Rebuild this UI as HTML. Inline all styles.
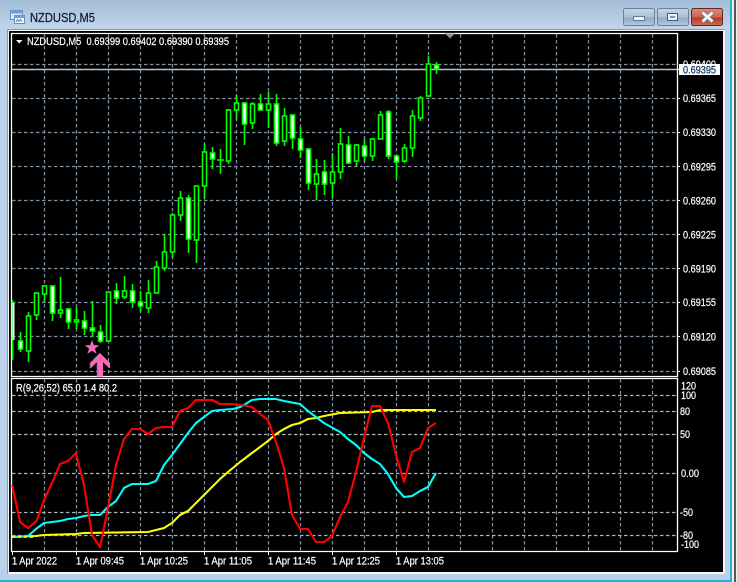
<!DOCTYPE html>
<html><head><meta charset="utf-8"><title>NZDUSD,M5</title>
<style>
html,body{margin:0;padding:0;background:#fff}
svg{display:block}
text{font-family:"Liberation Sans",sans-serif;font-size:11px;fill:#fff;stroke:#fff;stroke-width:.22px}
.g{stroke:#7f8fa0;stroke-width:1.25;stroke-dasharray:3.5 2.5;fill:none}
.c rect{stroke:#00ff00;stroke-width:1.6}
.h{fill:#000}.w{fill:#fff}
.l{fill:none;stroke-width:2.1;stroke-linejoin:round}
</style></head><body>
<svg width="737" height="582" viewBox="0 0 737 582" xmlns="http://www.w3.org/2000/svg">
<defs>
<linearGradient id="tb" x1="0" y1="0" x2="0" y2="1"><stop offset="0" stop-color="#a3bdd7"/><stop offset="1" stop-color="#c3d6e9"/></linearGradient>
<linearGradient id="btn" x1="0" y1="0" x2="0" y2="1"><stop offset="0" stop-color="#c5d6e6"/><stop offset=".5" stop-color="#a9c1d8"/><stop offset=".55" stop-color="#8facc8"/><stop offset="1" stop-color="#b4cade"/></linearGradient>
<linearGradient id="cl" x1="0" y1="0" x2="0" y2="1"><stop offset="0" stop-color="#dd8a7c"/><stop offset=".5" stop-color="#cf6453"/><stop offset=".55" stop-color="#b83a2a"/><stop offset="1" stop-color="#cc6a58"/></linearGradient>
</defs>
<rect width="737" height="582" fill="#b9d1ea"/>
<rect width="731" height="30" fill="url(#tb)"/>
<rect x="730" y="0" width="2" height="582" fill="#1fb4cf"/>
<rect x="732" y="0" width="2" height="582" fill="#f0f0f0"/>
<rect x="734" y="0" width="2" height="582" fill="#555"/>
<rect x="736" y="0" width="1" height="582" fill="#eee"/>
<rect x="0" y="580" width="732" height="2" fill="#1fb4cf"/>

<!-- title icon -->
<rect x="10.5" y="10.5" width="12" height="9" fill="#dce9f7" stroke="#5f8fc7"/>
<rect x="10.5" y="10.5" width="12" height="3" fill="#6f9fd6"/>
<rect x="14.5" y="15.5" width="10" height="8" fill="#f2f7fc" stroke="#5f8fc7"/>
<rect x="14.5" y="15.5" width="10" height="2.5" fill="#6f9fd6"/>
<path d="M16 22l1.5-2.5 1.5 2 1.5-2 1.5 2" fill="none" stroke="#3a6ea8" stroke-width=".8"/>
<text x="30" y="22" style="font-size:13px;fill:#141c30;stroke:#141c30;stroke-width:.25px" textLength="65" lengthAdjust="spacingAndGlyphs">NZDUSD,M5</text>

<!-- buttons -->
<rect x="623.5" y="8.5" width="31" height="17" rx="2" fill="url(#btn)" stroke="#6b8199"/>
<rect x="633.5" y="16.5" width="11" height="4" fill="#f1f4f7" stroke="#54647a" stroke-width=".8"/>
<rect x="657.5" y="8.5" width="31" height="17" rx="2" fill="url(#btn)" stroke="#6b8199"/>
<rect x="667.5" y="13.5" width="10" height="7" fill="#eef2f6" stroke="#4a5a70"/>
<rect x="670" y="16" width="5" height="2" fill="#7f98b2"/>
<rect x="691.5" y="8.5" width="31" height="17" rx="2" fill="url(#cl)" stroke="#5b2a2a"/>
<path d="M702.5 12.5L712.5 21.5M712.5 12.5L702.5 21.5" stroke="#55606e" stroke-width="4.4"/>
<path d="M702.5 12.5L712.5 21.5M712.5 12.5L702.5 21.5" stroke="#f4f4f4" stroke-width="3"/>

<!-- client area -->
<rect x="7" y="29" width="718" height="545" fill="#f4f6f8"/>
<path d="M7.5 574V29.5H725" stroke="#8d99a6" stroke-width="1" fill="none"/>
<rect x="9" y="31" width="714" height="541" fill="#000"/>

<!-- frames -->
<path d="M11.500 376.500V33.500H677.500V376.500H11.500ZM11.500 551.500V378.500H677.500V551.500H11.500Z" fill="none" stroke="#fff" stroke-width="1.3"/>

<!-- grid -->
<path class="g" d="M44.500 34V376M76.500 34V376M108.500 34V376M140.500 34V376M172.500 34V376M204.500 34V376M236.500 34V376M268.500 34V376M300.500 34V376M332.500 34V376M364.500 34V376M396.500 34V376M428.500 34V376M460.500 34V376M492.500 34V376M524.500 34V376M556.500 34V376M588.500 34V376M620.500 34V376M652.500 34V376"/>
<path class="g" d="M12 64.500H677M12 98.500H677M12 132.500H677M12 166.500H677M12 200.500H677M12 234.500H677M12 268.500H677M12 302.500H677M12 336.500H677M12 371.500H677"/>
<path class="g" d="M44.500 379V551M76.500 379V551M108.500 379V551M140.500 379V551M172.500 379V551M204.500 379V551M236.500 379V551M268.500 379V551M300.500 379V551M332.500 379V551M364.500 379V551M396.500 379V551M428.500 379V551M460.500 379V551M492.500 379V551M524.500 379V551M556.500 379V551M588.500 379V551M620.500 379V551M652.500 379V551"/>
<path class="g" style="stroke:#a9b4bf" d="M12 395.500H677M12 411.500H677M12 434.500H677M12 473.500H677M12 512.500H677M12 535.500H677"/>

<!-- bid line -->
<path d="M12 69.500H677" stroke="#c0c0c0" stroke-width="1.4"/>
<path d="M445 33.500H455L450 38.500Z" fill="#8a8f96"/>

<!-- candles -->
<g transform="translate(.5 0)">
<path stroke="#00ff00" stroke-width="1.6" fill="none" d="M12 300V360M20 332V352M28 312V362M36 293V320M44 285V302M52 286V321M60 277V318M68 309V329M76 307V329M84 311V335M92 301V337M100 325V343M108 292V341M116 283V304M124 276V299M132 284V308M140 291V312M148 280V313M156 261V293M164 234V271M172 213V258M180 191V221M188 195V253M196 186V263M204 144V199M212 147V169M220 149V174M216.500 160H223.500M228 109V164M236 95V120M244 102V145M252 102V129M260 94V110M268 92V128M276 94V146M284 108V146M292 115V149M300 127V158M308 149V190M316 159V200M324 160V195M332 153V198M340 128V179M348 136V164M356 144V166M364 139V162M372 138V161M380 111V139M388 110V159M396 156V179M404 144V163M412 110V157M420 96V121M428 56V96M436 62V74"/>
<g class="c">
<rect class="w" x="12" y="303" width="2" height="37" style="stroke:none"/>
<rect class="w" x="18" y="341" width="4" height="8"/>
<rect class="h" x="26" y="316" width="4" height="35"/>
<rect class="h" x="34" y="293" width="4" height="22"/>
<rect class="h" x="42" y="286" width="4" height="8"/>
<rect class="w" x="50" y="286" width="4" height="27"/>
<rect class="h" x="58" y="310" width="4" height="3"/>
<rect class="w" x="66" y="309" width="4" height="13"/>
<rect class="h" x="74" y="320" width="4" height="2"/>
<rect class="w" x="82" y="321" width="4" height="7"/>
<rect class="w" x="90" y="328" width="4" height="3"/>
<rect class="w" x="98" y="332" width="4" height="9"/>
<rect class="h" x="106" y="292" width="4" height="49"/>
<rect class="w" x="114" y="291" width="4" height="7"/>
<rect class="h" x="122" y="291" width="4" height="6"/>
<rect class="w" x="130" y="291" width="4" height="11"/>
<rect class="w" x="138" y="302" width="4" height="4"/>
<rect class="h" x="146" y="293" width="4" height="15"/>
<rect class="h" x="154" y="267" width="4" height="26"/>
<rect class="h" x="162" y="252" width="4" height="16"/>
<rect class="h" x="170" y="215" width="4" height="37"/>
<rect class="h" x="178" y="198" width="4" height="17"/>
<rect class="w" x="186" y="198" width="4" height="41"/>
<rect class="h" x="194" y="186" width="4" height="54"/>
<rect class="h" x="202" y="152" width="4" height="34"/>
<rect class="w" x="210" y="153" width="4" height="6"/>
<rect class="h" x="226" y="110" width="4" height="51"/>
<rect class="h" x="234" y="103" width="4" height="7"/>
<rect class="w" x="242" y="103" width="4" height="21"/>
<rect class="h" x="250" y="104" width="4" height="19"/>
<rect class="w" x="258" y="104" width="4" height="6"/>
<rect class="h" x="266" y="104" width="4" height="6"/>
<rect class="w" x="274" y="104" width="4" height="39"/>
<rect class="h" x="282" y="116" width="4" height="25"/>
<rect class="w" x="290" y="115" width="4" height="23"/>
<rect class="w" x="298" y="139" width="4" height="11"/>
<rect class="w" x="306" y="149" width="4" height="34"/>
<rect class="h" x="314" y="174" width="4" height="10"/>
<rect class="w" x="322" y="172" width="4" height="12"/>
<rect class="h" x="330" y="172" width="4" height="11"/>
<rect class="h" x="338" y="144" width="4" height="28"/>
<rect class="w" x="346" y="145" width="4" height="18"/>
<rect class="h" x="354" y="145" width="4" height="16"/>
<rect class="w" x="362" y="146" width="4" height="10"/>
<rect class="h" x="370" y="139" width="4" height="17"/>
<rect class="h" x="378" y="115" width="4" height="24"/>
<rect class="w" x="386" y="112" width="4" height="44"/>
<rect class="w" x="394" y="156" width="4" height="6"/>
<rect class="h" x="402" y="148" width="4" height="13"/>
<rect class="h" x="410" y="116" width="4" height="32"/>
<rect class="h" x="418" y="98" width="4" height="20"/>
<rect class="h" x="426" y="64" width="4" height="32"/>
<rect class="w" x="434" y="65" width="4" height="4"/>
</g></g>

<!-- star & arrow -->
<path d="M92 340l1.800 5.200 5.400.1-4.300 3.300 1.600 5.200-4.500-3.100-4.500 3.100 1.600-5.200-4.300-3.300 5.400-.1Z" fill="#ff69b4" stroke="#5a4a9a" stroke-width=".4"/>
<path d="M100 353L90 363V368H91L97 362V376.500H103V362L109 368H110V363Z" fill="#ff69b4"/>
<path d="M100 353L90 363V368H91M97 362V376.500" fill="none" stroke="#6a5ab0" stroke-width=".7"/>

<!-- indicator lines -->
<polyline class="l" stroke="#ffff00" points="12,537 36,536 44,535 76,534 84,533 148,532 156,530 164,528 172,523 180,515 188,511 196,503 204,495 212,487 220,479 228,472 240,462 252,453 260,447 268,441 276,434 284,429 292,425 300,423 308,419 316,418 324,416 340,413 372,412 380,410 428,410 436,410"/>
<polyline class="l" stroke="#00ffff" points="12,537 28,536 36,529 44,523 52,522 60,521 68,519 76,518 84,516 92,515 100,515 108,507 116,501 124,488 132,484 148,484 156,481 164,465 172,455 180,444 188,433 196,423 204,417 212,411 220,410 233,409 240,407 244,405 252,400 260,399 276,399 284,401 300,404 308,411 316,417 324,423 340,432 348,439 356,445 364,453 372,459 380,464 388,474 396,488 404,497 412,496 420,491 428,487 436,473"/>
<polyline class="l" stroke="#ff0000" points="12.300,485 20,522 28,528 36.700,521 44,500 52,483 60,464 68,461 76,453 84,485 92,535 100,547 108,508 116,465 124,439 132,429 140,429 148,434 156,428 164,427 172,427 180,411 188,408 196,400 212,400 220,404 233,404 247,406 252,407 260,414 268,420 276,442 284,468 292,515 300,529 308,529 316,542 324,542 332,536 340,517 348,502 356,472 364,438 372,406 380,406 388,423 396,455 404,482 412,452 420,448 428,428 436,423"/>
<path d="M12 537H36" stroke="#ffff00" stroke-width="1.800" stroke-dasharray="3 3"/>

<!-- legends -->
<path d="M16 40H22.500L19.200 43.500Z" fill="#fff"/>
<text x="27" y="45" textLength="202" lengthAdjust="spacingAndGlyphs" xml:space="preserve">NZDUSD,M5  0.69399 0.69402 0.69390 0.69395</text>
<text x="16" y="391.500" textLength="101" lengthAdjust="spacingAndGlyphs">R(9,26,52) 65.0 1.4 80.2</text>

<!-- price axis -->
<path stroke="#fff" d="M677 98.500H680M677 132.500H680M677 166.500H680M677 200.500H680M677 234.500H680M677 268.500H680M677 302.500H680M677 336.500H680M677 371.500H680"/>
<g>
<text x="683" y="68" textLength="33" lengthAdjust="spacingAndGlyphs">0.69400</text>
<rect x="679" y="64" width="41" height="11" fill="#fff"/>
<path d="M677 69.500H680" stroke="#fff"/>
<text x="683" y="73.500" style="fill:#0a2a55;stroke:#0a2a55" textLength="33" lengthAdjust="spacingAndGlyphs">0.69395</text>
<text x="683" y="102" textLength="33" lengthAdjust="spacingAndGlyphs">0.69365</text>
<text x="683" y="136" textLength="33" lengthAdjust="spacingAndGlyphs">0.69330</text>
<text x="683" y="170.500" textLength="33" lengthAdjust="spacingAndGlyphs">0.69295</text>
<text x="683" y="204.500" textLength="33" lengthAdjust="spacingAndGlyphs">0.69260</text>
<text x="683" y="238.500" textLength="33" lengthAdjust="spacingAndGlyphs">0.69225</text>
<text x="683" y="272.500" textLength="33" lengthAdjust="spacingAndGlyphs">0.69190</text>
<text x="683" y="306" textLength="33" lengthAdjust="spacingAndGlyphs">0.69155</text>
<text x="683" y="340.500" textLength="33" lengthAdjust="spacingAndGlyphs">0.69120</text>
<text x="683" y="375" textLength="33" lengthAdjust="spacingAndGlyphs">0.69085</text>
<text x="681" y="389.500" textLength="15" lengthAdjust="spacingAndGlyphs">120</text>
<text x="681" y="399" textLength="15" lengthAdjust="spacingAndGlyphs">100</text>
<text x="680" y="415" textLength="10" lengthAdjust="spacingAndGlyphs">80</text>
<text x="680" y="438" textLength="10" lengthAdjust="spacingAndGlyphs">50</text>
<text x="681" y="477" textLength="18" lengthAdjust="spacingAndGlyphs">0.00</text>
<text x="680" y="516" textLength="13" lengthAdjust="spacingAndGlyphs">-50</text>
<text x="680" y="539" textLength="13" lengthAdjust="spacingAndGlyphs">-80</text>
<text x="681" y="548" textLength="18" lengthAdjust="spacingAndGlyphs">-100</text>
</g>

<!-- time axis -->
<path stroke="#fff" d="M12.500 551V555M76.500 551V555M140.500 551V555M204.500 551V555M268.500 551V555M332.500 551V555M396.500 551V555"/>
<text x="12" y="564.500" textLength="45" lengthAdjust="spacingAndGlyphs">1 Apr 2022</text>
<text x="76" y="564.500" textLength="48" lengthAdjust="spacingAndGlyphs">1 Apr 09:45</text>
<text x="140" y="564.500" textLength="48" lengthAdjust="spacingAndGlyphs">1 Apr 10:25</text>
<text x="204" y="564.500" textLength="48" lengthAdjust="spacingAndGlyphs">1 Apr 11:05</text>
<text x="268" y="564.500" textLength="48" lengthAdjust="spacingAndGlyphs">1 Apr 11:45</text>
<text x="332" y="564.500" textLength="48" lengthAdjust="spacingAndGlyphs">1 Apr 12:25</text>
<text x="396" y="564.500" textLength="48" lengthAdjust="spacingAndGlyphs">1 Apr 13:05</text>
</svg>
</body></html>
